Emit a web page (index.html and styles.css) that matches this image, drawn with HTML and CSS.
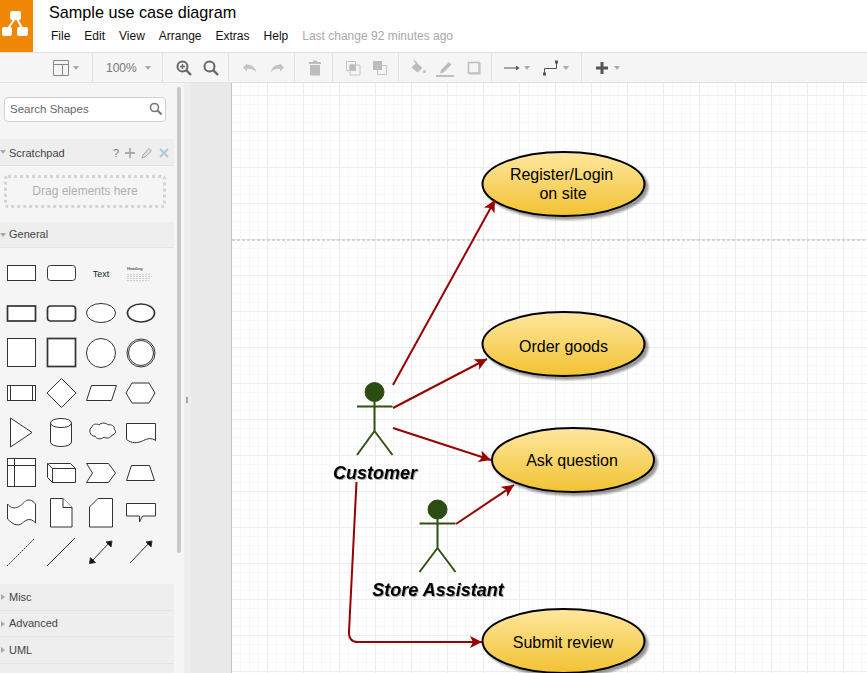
FILE: index.html
```html
<!DOCTYPE html>
<html lang="en">
<head>
    <meta charset="UTF-8">
    <meta name="viewport" content="width=device-width, initial-scale=1.0">
    <title>Sample use case diagram</title>
    <link rel="stylesheet" href="styles.css">
</head>
<body>
    <header class="app-header">
        <div class="logo">
            <svg width="33" height="52" viewBox="0 0 33 52">
                <path d="M16 17 L7 30 M16 17 L23 30" stroke="#fff" stroke-width="2" fill="none"/>
                <rect x="10" y="11" width="11" height="9" rx="2" fill="#fff"/>
                <rect x="2" y="27" width="10" height="9" rx="2" fill="#fff"/>
                <rect x="17" y="27" width="11" height="9" rx="2" fill="#fff"/>
            </svg>
        </div>
        <div class="title-block">
            <div class="doc-title">Sample use case diagram</div>
            <nav class="menu">
                <span>File</span>
                <span>Edit</span>
                <span>View</span>
                <span>Arrange</span>
                <span>Extras</span>
                <span>Help</span>
                <span class="last-change">Last change 92 minutes ago</span>
            </nav>
        </div>
    </header>

    <div class="toolbar">
        <div class="tb-group tb-layout">
            <svg class="tb-icon" viewBox="0 0 18 18"><path d="M1.500 1.500h15v15h-15z M1.500 5.500h15 M10.500 5.500v11" fill="none" stroke="#888" stroke-width="1"/></svg>
            <i class="caret"></i>
        </div>
        <div class="tb-group tb-zoom">
            <span class="zoom-value">100%</span>
            <i class="caret"></i>
        </div>
        <div class="tb-group tb-p12">
            <svg class="tb-icon" viewBox="0 0 18 18"><circle cx="7.500" cy="7.500" r="5" fill="none" stroke="#666" stroke-width="2"/><path d="M11 11l5 5" stroke="#666" stroke-width="2.400"/><path d="M5 7.500h5M7.500 5v5" stroke="#666" stroke-width="1.400"/></svg>
            <svg class="tb-icon" viewBox="0 0 18 18"><circle cx="7.500" cy="7.500" r="5" fill="none" stroke="#666" stroke-width="2"/><path d="M11 11l5 5" stroke="#666" stroke-width="2.400"/></svg>
        </div>
        <div class="tb-group tb-p12">
            <svg class="tb-icon" viewBox="0 0 18 18"><path d="M6 4.500L2 8.500l4 4v-2.600c3.600-.3 6.600.5 9 3-.6-4.200-4-7-9-7.300z" fill="#c4c4c4"/></svg>
            <svg class="tb-icon" viewBox="0 0 18 18"><path d="M12 4.500l4 4-4 4v-2.600c-3.600-.3-6.600.5-9 3 .6-4.200 4-7 9-7.300z" fill="#c4c4c4"/></svg>
        </div>
        <div class="tb-group tb-p12 tb-trash">
            <svg class="tb-icon" viewBox="0 0 18 18"><path d="M3 3h12v2H3z M7 1.500h4V3H7z M4 6h10v10.500H4z" fill="#bdbdbd"/></svg>
        </div>
        <div class="tb-group tb-p11 tb-order">
            <svg class="tb-icon" viewBox="0 0 18 18"><path d="M2.500 2.500h9v9h-9z" fill="none" stroke="#c4c4c4"/><path d="M6 6h10v10H6z" fill="none" stroke="#c4c4c4"/><path d="M5.500 5.500h6v6h-6z" fill="#bdbdbd"/></svg>
            <svg class="tb-icon" viewBox="0 0 18 18"><path d="M2 2h9v9H2z" fill="#bdbdbd"/><path d="M6.500 6.500h9v9h-9z" fill="#f5f5f5" stroke="#c4c4c4"/><path d="M6.500 6.500h4.500v4.500h-4.500z" fill="#bdbdbd"/></svg>
        </div>
        <div class="tb-group tb-p10 tb-style">
            <svg class="tb-icon" viewBox="0 0 18 18"><path d="M7.500 3.500l6 5.500-5 4.500-6-5z" fill="#bdbdbd"/><path d="M5 1.500l3 3" stroke="#bdbdbd" stroke-width="1.200"/><circle cx="15.500" cy="12.500" r="1.500" fill="#bdbdbd"/></svg>
            <svg class="tb-icon" viewBox="0 0 18 18"><path d="M5 11l8-8 2.500 2.500-8 8-3.500 1z" fill="#bdbdbd"/><path d="M0 17h18" stroke="#bdbdbd" stroke-width="2"/></svg>
            <svg class="tb-icon" viewBox="0 0 18 18"><path d="M6 4h12v12H6z" fill="#d8d8d8"/><path d="M5.500 3.500h10.500v10.500H5.500z" fill="#f5f5f5" stroke="#bdbdbd" stroke-width="1.500"/></svg>
        </div>
        <div class="tb-group tb-p11 tb-lines">
            <div class="tb-item">
                <svg class="tb-icon" viewBox="0 0 18 18"><path d="M1 9h13" stroke="#555" stroke-width="1"/><path d="M13 6.500L16.500 9 13 11.500z" fill="#555"/></svg>
                <i class="caret"></i>
            </div>
            <div class="tb-item">
                <svg class="tb-icon" viewBox="0 0 18 18"><path d="M2.500 15V9.500h12V3" fill="none" stroke="#555" stroke-width="1"/><rect x="1" y="13.500" width="3" height="3" fill="#555"/><rect x="13" y="1.500" width="3" height="3" fill="#555"/></svg>
                <i class="caret"></i>
            </div>
        </div>
        <div class="tb-group tb-p11 tb-insert">
            <div class="tb-item">
                <svg class="tb-icon" viewBox="0 0 18 18"><path d="M3 9h12M9 3v12" stroke="#555" stroke-width="3"/></svg>
                <i class="caret"></i>
            </div>
        </div>
    </div>

    <div class="workspace">
        <aside class="sidebar">
            <div class="search">
                <span>Search Shapes</span>
                <svg width="14" height="14" viewBox="0 0 14 14"><circle cx="5.500" cy="5.500" r="4" fill="none" stroke="#777" stroke-width="1.600"/><path d="M8.500 8.500l4 4" stroke="#777" stroke-width="2"/></svg>
            </div>

            <div class="section-head open scratch-head">
                <span class="section-name">Scratchpad</span>
                <div class="scratch-tools">
                    <span class="help-mark">?</span>
                    <svg width="10" height="10" viewBox="0 0 10 10"><path d="M5 0v10M0 5h10" stroke="#aaa" stroke-width="1.800"/></svg>
                    <svg width="12" height="12" viewBox="0 0 12 12"><path d="M1 11l1-3 6-6.500 2.500 2.500-6.500 6z" fill="#ddd" stroke="#aaa"/></svg>
                    <svg width="10" height="10" viewBox="0 0 10 10"><path d="M1 1l8 8M9 1l-8 8" stroke="#b4c7d6" stroke-width="2"/></svg>
                </div>
            </div>
            <div class="drop-zone">Drag elements here</div>

            <div class="section-head open general-head">
                <span class="section-name">General</span>
            </div>
            <div class="palette">
                <svg viewBox="0 0 40 40"><rect x="6.500" y="12.500" width="28" height="15"/></svg>
                <svg viewBox="0 0 40 40"><rect x="6.500" y="12.500" width="28" height="15" rx="3"/></svg>
                <svg viewBox="0 0 40 40"><text class="pal-text" x="20" y="23.500">Text</text></svg>
                <svg viewBox="0 0 40 40"><text class="pal-heading" x="6" y="17">Heading</text><path class="pal-lines" d="M6 21.500h24M6 23.500h25M6 25.500h24M6 27.500h22"/></svg>

                <svg viewBox="0 0 40 40"><rect class="thick" x="6.500" y="13" width="28" height="15"/></svg>
                <svg viewBox="0 0 40 40"><rect class="thick" x="6.500" y="13" width="28" height="15" rx="3"/></svg>
                <svg viewBox="0 0 40 40"><ellipse cx="20" cy="20" rx="14.500" ry="9.500"/></svg>
                <svg viewBox="0 0 40 40"><ellipse class="thick" cx="20" cy="20" rx="13.500" ry="9"/></svg>

                <svg viewBox="0 0 40 40"><rect x="6.500" y="5.500" width="28" height="28"/></svg>
                <svg viewBox="0 0 40 40"><rect class="thick" x="6.500" y="5.500" width="28" height="28"/></svg>
                <svg viewBox="0 0 40 40"><circle cx="20" cy="20" r="14.500"/></svg>
                <svg viewBox="0 0 40 40"><circle cx="20" cy="20" r="14"/><circle cx="20" cy="20" r="12.500"/></svg>

                <svg viewBox="0 0 40 40"><rect x="6.500" y="12.500" width="28" height="15"/><path d="M9.500 12.500v15M31.500 12.500v15"/></svg>
                <svg viewBox="0 0 40 40"><path d="M20.500 5.500L35 20 20.500 34.500 6 20z"/></svg>
                <svg viewBox="0 0 40 40"><path d="M10.500 12.500h25l-5 15h-25z"/></svg>
                <svg viewBox="0 0 40 40"><path d="M5 20l6-10h17l6 10-6 10H11z"/></svg>

                <svg viewBox="0 0 40 40"><path d="M9.500 5L31 19.500 9.500 34z"/></svg>
                <svg viewBox="0 0 40 40"><path d="M9.500 10c0-6 21-6 21 0v19c0 6-21 6-21 0z"/><path d="M9.500 10c0 6 21 6 21 0"/></svg>
                <svg viewBox="0 0 40 40"><path d="M11 14c1-4 6-3 7-2 2-3 8-2 9 0 3-1 7 1 6 4 3 2 1 6-2 6-1 3-6 4-8 2-3 3-8 2-9-1-5 1-7-7-3-9z"/></svg>
                <svg viewBox="0 0 40 40"><path d="M5.500 10.500h29v17c-4-3-8-2-12 0-6 3-12 3-17-1z"/></svg>

                <svg viewBox="0 0 40 40"><rect x="6.500" y="5.500" width="28" height="28"/><path d="M6.500 12.500h28M13.500 5.500v28"/></svg>
                <svg viewBox="0 0 40 40"><path d="M6.500 10.500h23l5 5v14h-23l-5-5z"/><path d="M6.500 10.500l5 5h23M11.500 15.500v14"/></svg>
                <svg viewBox="0 0 40 40"><path d="M5.500 10.500h22l7 9.500-7 9.500h-22l6-9.500z"/></svg>
                <svg viewBox="0 0 40 40"><path d="M10.500 12.500h18l5 15h-28z"/></svg>

                <svg viewBox="0 0 40 40"><path d="M6.500 11c7 9 15 0 18-3 3-2 7-1 10 3v19c-5-6-10-3-13 0-5 4-10 1-15-4z"/></svg>
                <svg viewBox="0 0 40 40"><path d="M9.500 5.500h12.500l9 9v19.500h-21.500z"/><path d="M22 5.500v9h9"/></svg>
                <svg viewBox="0 0 40 40"><path d="M17 5.500h14.500v28.500h-23v-20z"/></svg>
                <svg viewBox="0 0 40 40"><path d="M5.500 10.500h29v12.500h-13l-3 6v-6h-13z"/></svg>

                <svg viewBox="0 0 40 40"><path class="dashed" d="M6 33L33 6"/></svg>
                <svg viewBox="0 0 40 40"><path d="M6 33L34 5"/></svg>
                <svg viewBox="0 0 40 40"><path d="M11 28L28 10"/><path class="solid" d="M8.500 30.500l1-6 5 5zM31 8l-1 6-5-5z"/></svg>
                <svg viewBox="0 0 40 40"><path d="M9 30L28 10"/><path class="solid" d="M31 8l-1 6-5-5z"/></svg>
            </div>

            <div class="section-head closed first-closed"><span class="section-name">Misc</span></div>
            <div class="section-head closed"><span class="section-name">Advanced</span></div>
            <div class="section-head closed"><span class="section-name">UML</span></div>
            <div class="section-head closed"></div>
        </aside>

        <div class="side-scroll"><div class="scroll-thumb"></div></div>
        <div class="splitter"><div class="split-handle"></div></div>
        <div class="page-margin"></div>

        <main class="canvas">
            <svg class="diagram" width="635" height="590" viewBox="232 83 635 590">
                <defs>
                    <linearGradient id="usecase" x1="0" y1="0" x2="0" y2="1">
                        <stop offset="0" stop-color="#ffe79f"/>
                        <stop offset="1" stop-color="#f1c232"/>
                    </linearGradient>
                    <marker id="head" markerUnits="userSpaceOnUse" markerWidth="14" markerHeight="12" refX="12" refY="6" orient="auto">
                        <path d="M0 0L12 6 0 12 3 6z" fill="#990000"/>
                    </marker>
                </defs>

                <path class="page-break" d="M232 240H867"/>

                <!-- use cases -->
                <ellipse class="usecase" cx="563.500" cy="184" rx="81" ry="32"/>
                <ellipse class="usecase" cx="563.500" cy="344" rx="81" ry="32"/>
                <ellipse class="usecase" cx="573" cy="460" rx="81" ry="32"/>
                <ellipse class="usecase" cx="563.500" cy="641" rx="81" ry="32"/>
                <text class="usecase-label" x="561.500" y="180">Register/Login</text>
                <text class="usecase-label" x="563" y="199">on site</text>
                <text class="usecase-label" x="563.500" y="352">Order goods</text>
                <text class="usecase-label" x="572" y="466">Ask question</text>
                <text class="usecase-label" x="563" y="648">Submit review</text>

                <!-- actors -->
                <g class="actor">
                    <circle cx="374.500" cy="392" r="9.500"/>
                    <path d="M357 406.500h35.500M374.500 402v29M374.500 431l-17.500 24M374.500 431l18 24"/>
                </g>
                <g class="actor">
                    <circle cx="437.500" cy="509.500" r="9.500"/>
                    <path d="M419.500 523.500h36M437.500 519v29M437.500 548l-18 24M437.500 548l18 24"/>
                </g>
                <text class="actor-label" x="375" y="479">Customer</text>
                <text class="actor-label" x="438" y="596">Store Assistant</text>

                <!-- connectors -->
                <path class="link" d="M393 385L495 200"/>
                <path class="link" d="M393 408L487 359"/>
                <path class="link" d="M393 428L491 460"/>
                <path class="link" d="M456 524L514 485"/>
                <path class="link" d="M356.500 482L349 632Q348.500 642 358 642H482"/>
            </svg>
        </main>
    </div>
</body>
</html>
```

FILE: styles.css
```css
/* General Styles */
html, body {
    height: 100%;
}

body {
    margin: 0;
    font-family: "Liberation Sans", Arial, sans-serif;
    background-color: #fff;
    color: #000;
    overflow: hidden;
    display: flex;
    flex-direction: column;
}

/* Header */
.app-header {
    display: flex;
    height: 52px;
    flex-shrink: 0;
}

.logo {
    width: 33px;
    height: 52px;
    background-color: #f08705;
}

.logo svg {
    display: block;
}

.title-block {
    margin-left: 16px;
}

.doc-title {
    font-size: 16.2px;
    line-height: 20px;
    margin-top: 2px;
}

.menu {
    display: flex;
    gap: 14px;
    margin-top: 5px;
    margin-left: 2px;
    font-size: 12px;
    line-height: 18px;
    color: #111;
}

.last-change {
    color: #a9a9a9;
}

/* Toolbar */
.toolbar {
    display: flex;
    height: 29px;
    flex-shrink: 0;
    background-color: #f5f5f5;
    border-top: 1px solid #e2e2e2;
    border-bottom: 1px solid #e2e2e2;
}

.tb-group {
    display: flex;
    align-items: center;
    gap: 9px;
    border-right: 1px solid #e2e2e2;
    box-sizing: border-box;
}

.tb-item {
    display: flex;
    align-items: center;
    gap: 3px;
}

.tb-icon {
    width: 18px;
    height: 18px;
    display: block;
}

.caret {
    display: block;
    width: 0;
    height: 0;
    border-left: 3.5px solid transparent;
    border-right: 3.5px solid transparent;
    border-top: 4px solid #ababab;
}

.tb-layout {
    width: 93px;
    padding-left: 52px;
    gap: 3px;
}

.tb-zoom {
    width: 70px;
    padding-left: 13px;
    gap: 8px;
}

.zoom-value {
    font-size: 12px;
    color: #777;
}

.tb-p12 {
    width: 66px;
    padding-left: 12px;
}

.tb-trash {
    width: 38px;
    padding-left: 11px;
}

.tb-p11 {
    padding-left: 11px;
}

.tb-order {
    width: 66px;
}

.tb-p10 {
    padding-left: 10px;
}

.tb-style {
    width: 93px;
}

.tb-lines {
    width: 90px;
    gap: 12px;
}

.tb-insert {
    border-right: none;
}

/* Workspace */
.workspace {
    display: flex;
    flex: 1;
    min-height: 0;
}

.sidebar {
    width: 174px;
    flex-shrink: 0;
    background-color: #f5f5f5;
    overflow: hidden;
}

.search {
    display: flex;
    align-items: center;
    justify-content: space-between;
    box-sizing: border-box;
    width: 162px;
    height: 25px;
    margin: 14px 0 0 4px;
    padding: 0 2px 2px 5px;
    background-color: #fff;
    border: 1px solid #d0d0d0;
    border-radius: 4px;
    font-size: 11.5px;
    color: #666;
}

.section-head {
    display: flex;
    align-items: center;
    justify-content: space-between;
    box-sizing: border-box;
    height: 26.5px;
    padding-left: 9px;
    background-color: #eee;
    border-bottom: 1px solid #e2e2e2;
    font-size: 11px;
    color: #444;
    position: relative;
}

/* disclosure triangles */
.section-head.open::before {
    content: "";
    position: absolute;
    left: 0;
    top: 11px;
    border-left: 3px solid transparent;
    border-right: 3px solid transparent;
    border-top: 4px solid #aaa;
}

.section-head.closed::before {
    content: "";
    position: absolute;
    left: 1px;
    top: 10px;
    border-top: 3px solid transparent;
    border-bottom: 3px solid transparent;
    border-left: 4px solid #aaa;
}

.scratch-head {
    height: 27px;
    margin-top: 17px;
    padding-top: 2px;
}

.general-head {
    height: 26px;
    margin-top: 14px;
    padding-bottom: 2px;
}

.first-closed {
    margin-top: 11px;
}

.scratch-tools {
    display: flex;
    align-items: center;
    gap: 6px;
    padding-right: 5px;
}

.help-mark {
    font-size: 11px;
    color: #777;
}

.drop-zone {
    box-sizing: border-box;
    width: 162px;
    height: 33px;
    margin: 9px 0 0 4px;
    border: 3px dotted #d4d4d4;
    border-radius: 4px;
    font-size: 12px;
    line-height: 27px;
    text-align: center;
    color: #b0b0b0;
}

.palette {
    display: grid;
    grid-template-columns: repeat(4, 40px);
    grid-auto-rows: 40px;
    padding: 5px 0 0 1px;
}

.palette svg {
    display: block;
    width: 40px;
    height: 40px;
    fill: #fff;
    stroke: #333;
    stroke-width: 1;
}

.palette .thick {
    stroke-width: 1.7;
}

.palette .dashed {
    stroke-dasharray: 2 1;
}

.palette .solid {
    fill: #111;
}

.pal-text {
    font-size: 9px;
    text-anchor: middle;
    fill: #222;
    stroke: none;
}

.pal-heading {
    font-size: 4px;
    font-weight: bold;
    fill: #556;
    stroke: none;
}

.palette .pal-lines {
    fill: none;
    stroke: #b4b4b4;
    stroke-width: 0.6;
    stroke-dasharray: 2 1;
}

.side-scroll {
    width: 10px;
    flex-shrink: 0;
    background-color: #f5f5f5;
}

.scroll-thumb {
    width: 4px;
    height: 466px;
    margin: 4px 0 0 3px;
    background-color: #c8c8c8;
    border-radius: 2px;
}

.splitter {
    width: 7px;
    flex-shrink: 0;
    background-color: #eee;
}

.split-handle {
    width: 2px;
    height: 6px;
    margin: 314px 0 0 2px;
    background-color: #aaa;
}

.page-margin {
    width: 40px;
    flex-shrink: 0;
    background-color: #e9e9e9;
    border-right: 1px solid #c4c4c4;
}

/* Canvas with the 9px / 36px grid */
.canvas {
    flex: 1;
    min-width: 0;
    background-color: #fff;
    background-image:
        linear-gradient(to right, transparent 35px, #ececec 35px),
        linear-gradient(to bottom, transparent 35px, #ececec 35px),
        linear-gradient(to right, transparent 8px, #f7f7f7 8px),
        linear-gradient(to bottom, transparent 8px, #f7f7f7 8px);
    background-size: 36px 36px, 36px 36px, 9px 9px, 9px 9px;
    background-position: 0 0, 0 -23px, 0 0, 0 -5px;
}

.diagram {
    display: block;
}

.page-break {
    stroke: #c8c8c8;
    stroke-width: 1.5;
    stroke-dasharray: 3 2;
    fill: none;
}

.usecase {
    fill: url(#usecase);
    stroke: #000;
    stroke-width: 2;
    filter: drop-shadow(3px 3px 1px rgba(0, 0, 0, 0.4));
}

.usecase-label {
    font-size: 16px;
    text-anchor: middle;
    fill: #000;
}

.actor circle {
    fill: #2b4d11;
    stroke: #2b4d11;
}

.actor path {
    fill: none;
    stroke: #2f5316;
    stroke-width: 2;
}

.actor-label {
    font-size: 18px;
    font-weight: bold;
    font-style: italic;
    text-anchor: middle;
    fill: #000;
    filter: drop-shadow(1px 1px 0.5px rgba(0, 0, 0, 0.35));
}

.link {
    fill: none;
    stroke: #990000;
    stroke-width: 2;
    marker-end: url(#head);
}
```
